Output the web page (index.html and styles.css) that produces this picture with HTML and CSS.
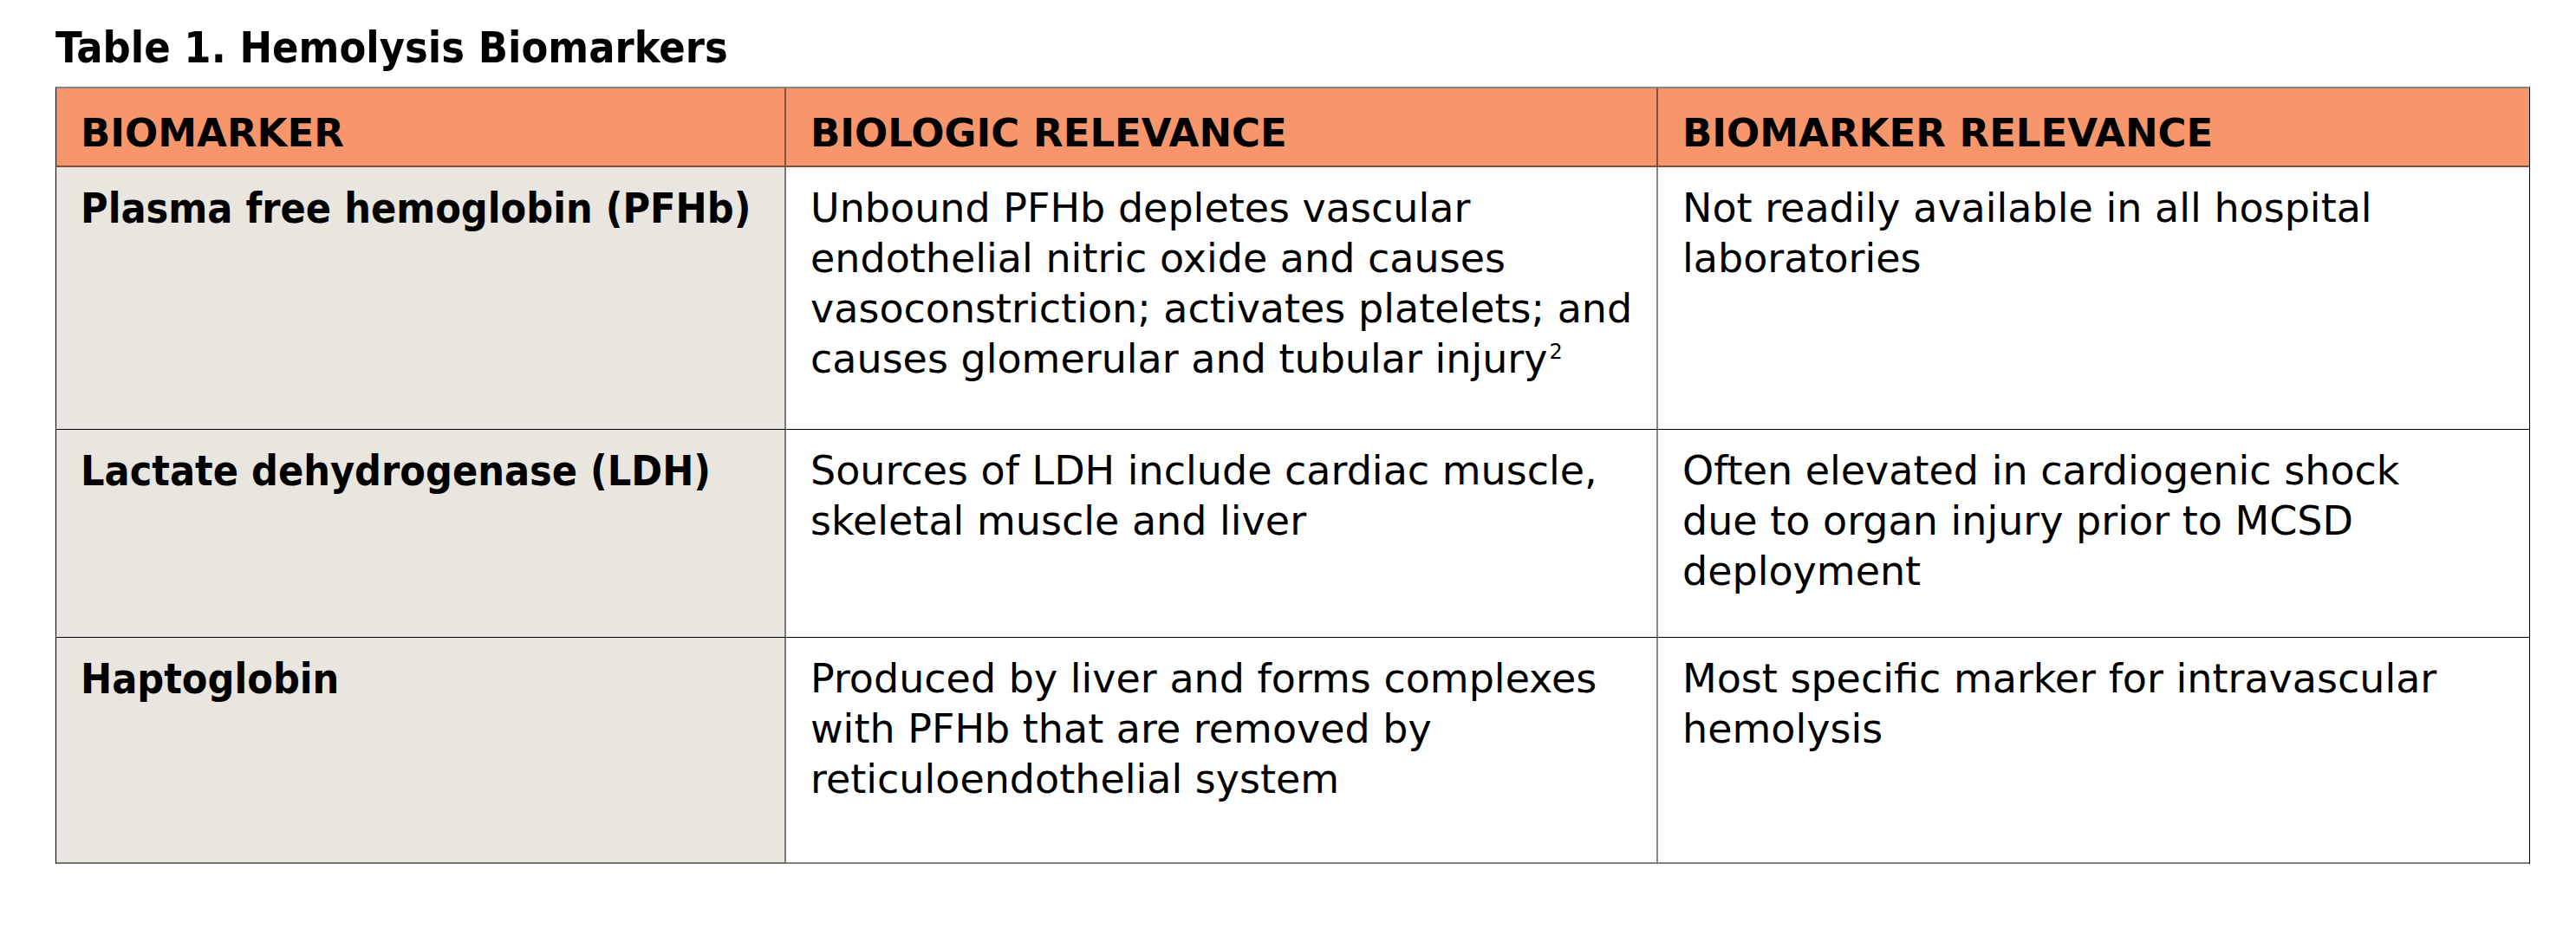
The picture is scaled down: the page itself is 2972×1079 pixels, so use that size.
FILE: index.html
```html
<!DOCTYPE html>
<html lang="en">
<head>
<meta charset="utf-8">
<title>Table 1. Hemolysis Biomarkers</title>
<link rel="stylesheet" href="styles.css">
</head>
<body>
<div class="page">
  <h1 class="title">Table 1. Hemolysis Biomarkers</h1>
  <table class="bio">
    <colgroup>
      <col class="c1">
      <col class="c2">
      <col class="c3">
    </colgroup>
    <thead>
      <tr class="head">
        <th>BIOMARKER</th>
        <th>BIOLOGIC RELEVANCE</th>
        <th>BIOMARKER RELEVANCE</th>
      </tr>
    </thead>
    <tbody>
      <tr class="r1">
        <th scope="row">Plasma free hemoglobin (PFHb)</th>
        <td>Unbound PFHb depletes vascular<br>endothelial nitric oxide and causes<br>vasoconstriction; activates platelets; and<br>causes glomerular and tubular injury<sup class="ref">2</sup></td>
        <td>Not readily available in all hospital<br>laboratories</td>
      </tr>
      <tr class="r2">
        <th scope="row">Lactate dehydrogenase (LDH)</th>
        <td>Sources of LDH include cardiac muscle,<br>skeletal muscle and liver</td>
        <td>Often elevated in cardiogenic shock<br>due to organ injury prior to MCSD<br>deployment</td>
      </tr>
      <tr class="r3">
        <th scope="row">Haptoglobin</th>
        <td>Produced by liver and forms complexes<br>with PFHb that are removed by<br>reticuloendothelial system</td>
        <td>Most specific marker for intravascular<br>hemolysis</td>
      </tr>
    </tbody>
  </table>
</div>
</body>
</html>
```

FILE: styles.css
```css
html, body {
  margin: 0;
  padding: 0;
  background: #ffffff;
  color: #000000;
}

.page {
  padding: 26px 0 0 64px;
  font-family: "DejaVu Sans", "Liberation Sans", sans-serif;
}

.title {
  margin: 0 0 16px;
  font-family: "DejaVu Sans Condensed", "DejaVu Sans", sans-serif;
  font-stretch: semi-condensed;
  font-weight: 700;
  font-size: 50px;
  line-height: 58px;
  color: #000;
}

.bio {
  width: 2855px;
  box-sizing: border-box;
  table-layout: fixed;
  border-collapse: separate;
  border-spacing: 0;
  border-top: 2px solid rgba(0, 0, 0, 0.47);
  border-left: 1px solid #000;
  border-right: 1px solid #000;
}

.c1 { width: 842px; }
.c2 { width: 1006px; }
.c3 { width: 1005px; }

.bio th,
.bio td {
  vertical-align: top;
  text-align: left;
  padding: 18px 20px 0 28px;
  white-space: nowrap;
  border-right: 2px solid rgba(0, 0, 0, 0.47);
}

.bio th:last-child,
.bio td:last-child {
  border-right: 0;
}

.head { height: 91px; }
.r1 { height: 303px; }
.r2 { height: 240px; }
.r3 { height: 261px; }

.head th {
  background: #f7966b;
  font-family: "DejaVu Sans", sans-serif;
  font-weight: 700;
  font-size: 45px;
  line-height: 54px;
  padding-top: 25px;
  border-bottom: 2px solid rgba(0, 0, 0, 0.47);
}

tbody th {
  background: #e9e5df;
  font-family: "DejaVu Sans Condensed", "DejaVu Sans", sans-serif;
  font-stretch: semi-condensed;
  font-weight: 700;
  font-size: 48px;
  line-height: 58px;
}

tbody td {
  background: #ffffff;
  font-weight: 400;
  font-size: 46px;
  line-height: 58px;
}

tbody th,
tbody td {
  border-bottom: 1px solid #000;
}

.r3 th,
.r3 td {
  border-bottom: 2px solid rgba(0, 0, 0, 0.5);
}

.ref {
  font-size: 24px;
  line-height: 0;
  vertical-align: 16px;
  margin-left: 2px;
}
```
